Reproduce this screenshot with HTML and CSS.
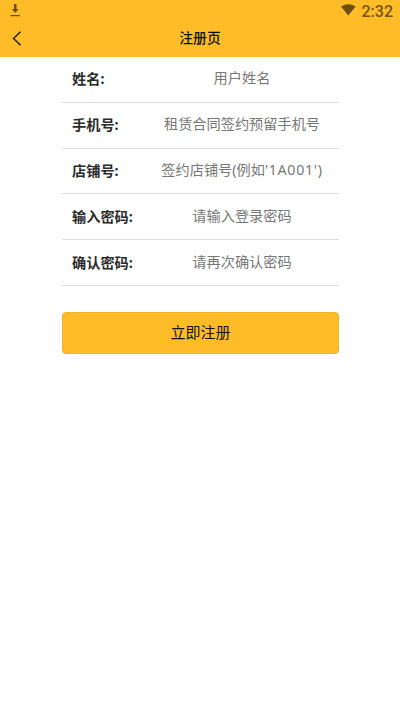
FILE: index.html
```html
<!DOCTYPE html>
<html lang="zh-CN">
<head>
<meta charset="utf-8">
<title>注册页</title>
<link rel="stylesheet" href="styles.css">
</head>
<body>
<header class="top">
  <div class="status">
    <svg class="download" width="10" height="13" viewBox="0 0 10 13"><path d="M4 0h2.500v5H8.500L5.200 9 2 5h2zM.5 11h9.500v1.300H.5z"/></svg>
    <div class="status-right">
      <svg width="15" height="12" viewBox="0 0 15 12"><path d="M0 2.500Q7.300-1.800 14.600 2.500L7.300 11.500z"/></svg>
      <span class="time">2:32</span>
    </div>
  </div>
  <nav class="nav">
    <svg class="back" width="9" height="15" viewBox="0 0 9 15"><path d="M8.500 .8 1.500 7.500 8.500 14.200"/></svg>
    <h1 class="title">注册页</h1>
  </nav>
</header>
<main class="form">
  <label class="row"><span class="label">姓名:</span><span class="hint">用户姓名</span></label>
  <label class="row"><span class="label">手机号:</span><span class="hint">租赁合同签约预留手机号</span></label>
  <label class="row"><span class="label">店铺号:</span><span class="hint">签约店铺号(例如<span class="code">'1A001')</span></span></label>
  <label class="row"><span class="label">输入密码:</span><span class="hint">请输入登录密码</span></label>
  <label class="row"><span class="label">确认密码:</span><span class="hint">请再次确认密码</span></label>
  <button class="submit">立即注册</button>
</main>
</body>
</html>
```
FILE: styles.css
```css
* { box-sizing: border-box; }
body { margin: 0; background: #fff; color: #2b2b2b; font-family: "Noto Sans", "Noto Sans CJK SC", sans-serif; }
.top { height: 57px; background: #fdbc28; }
.status { display: flex; justify-content: space-between; height: 20px; padding: 4px 7px 0 10px; }
.status svg { fill: #6e4f0c; }
.status-right { display: flex; gap: 6px; }
.time { margin-top: -1px; font: 500 16px/18px Roboto, sans-serif; color: #755510; }
.nav { display: grid; grid-template-columns: 40px 1fr 40px; align-items: center; height: 36px; }
.back { margin-left: 12px; fill: none; stroke: #111; stroke-width: 1.3; }
.title { margin: 0; text-align: center; font-size: 13.800px; line-height: 20px; font-weight: 500; color: #111; }
.form { width: 277px; margin: 0 auto 0 62px; }
.row { display: flex; align-items: center; height: 45.8px; border-bottom: 1px solid #dcdfe0; }
.label { width: 85px; padding-left: 10px; font-size: 14.200px; line-height: 20px; font-weight: 700; white-space: nowrap; }
.hint { flex: 1; padding: 0 2px 2px 0; text-align: center; font-size: 14.200px; line-height: 20px; color: #777; white-space: nowrap; }
.code { letter-spacing: .7px; }
.submit { display: block; width: 100%; height: 42px; margin-top: 26px; padding: 0 0 1px; border: 1px solid #f0b32a; border-radius: 4px; background: #fdbc28; color: #111; font: 15px/20px "Noto Sans", "Noto Sans CJK SC", sans-serif; }
```
